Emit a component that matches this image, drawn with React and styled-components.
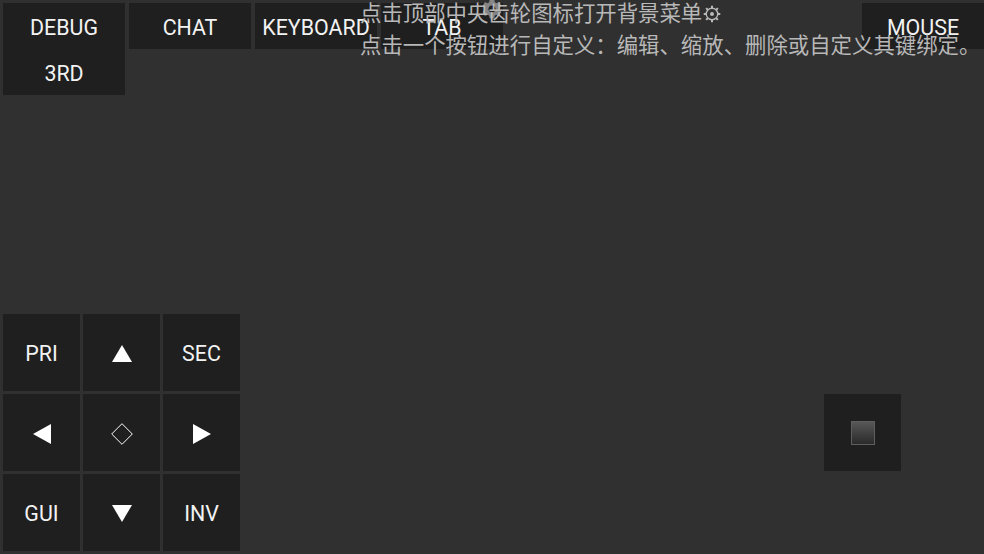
import React from "react";
import styled, { createGlobalStyle } from "styled-components";
import { MdSettings } from "react-icons/md";

const Global = createGlobalStyle`
  html, body { margin: 0; padding: 0; background: #303030; }
  body { font-family: Roboto, "Noto Sans", sans-serif; }
  * { box-sizing: border-box; }
`;

const Screen = styled.div`
  position: relative;
  width: 100vw;
  height: 100vh;
  background: #303030;
  display: flex;
  flex-direction: column;
  justify-content: space-between;
  overflow: hidden;
`;

const TopBar = styled.div`
  display: flex;
  align-items: flex-start;
  padding-top: 3px;
  padding-left: 3px;
`;

const Stack = styled.div`
  display: flex;
  flex-direction: column;
`;

const Key = styled.div`
  width: ${(p) => p.$w || 122}px;
  height: ${(p) => p.$h || 46}px;
  margin-left: ${(p) => p.$ml || 0}px;
  padding-top: 2px;
  background: #1f1f1f;
  color: #f2f2f2;
  font-family: Roboto, "Noto Sans", sans-serif;
  font-size: 21.4px;
  display: flex;
  align-items: center;
  justify-content: center;
  flex-shrink: 0;
`;

const Spacer = styled.div`
  flex: 1;
`;

const Hint = styled.div`
  position: absolute;
  left: 360px;
  top: -4px;
  font-family: "Noto Sans CJK SC", "Noto Sans", sans-serif;
  font-size: 21.4px;
  line-height: 32px;
  color: #b8b8b8;
  white-space: nowrap;
  pointer-events: none;
`;

const HintGear = styled.svg`
  display: inline-block;
  vertical-align: -2px;
  margin-left: 1px;
`;

const TopGear = styled.div`
  position: absolute;
  left: 480px;
  top: -3px;
  color: rgba(150, 150, 150, 0.85);
  display: flex;
`;

const BottomBar = styled.div`
  display: flex;
  align-items: flex-end;
  justify-content: space-between;
  padding: 0 83px 3px 3px;
`;

const Pad = styled.div`
  display: grid;
  grid-template-columns: repeat(3, 77px);
  grid-template-rows: repeat(3, 77px);
  gap: 3px;
`;

const PadKey = styled.div`
  background: #1f1f1f;
  color: #f2f2f2;
  font-family: Roboto, "Noto Sans", sans-serif;
  font-size: 21.4px;
  padding-top: 2px;
  display: flex;
  align-items: center;
  justify-content: center;
`;

const SquareKey = styled.div`
  width: 77px;
  height: 77px;
  margin-bottom: 80px;
  background: #1f1f1f;
  display: flex;
  align-items: center;
  justify-content: center;
`;

const StopIcon = styled.div`
  width: 24px;
  height: 24px;
  border: 1px solid #5e5e5e;
  background: linear-gradient(#575757, #2a2a2a);
`;

const Tri = ({ dir }) => {
  const pts = {
    up: "10,0 20,17 0,17",
    down: "0,0 20,0 10,17",
    left: "18,0 18,20 0,10",
    right: "0,0 18,10 0,20",
  }[dir];
  const w = dir === "up" || dir === "down" ? 20 : 18;
  const h = dir === "up" || dir === "down" ? 17 : 20;
  return (
    <svg width={w} height={h} viewBox={`0 0 ${w} ${h}`}>
      <polygon points={pts} fill="#ffffff" />
    </svg>
  );
};

const Diamond = () => (
  <svg width="22" height="22" viewBox="0 0 22 22">
    <polygon points="11,0.7 21.3,11 11,21.3 0.7,11" fill="none" stroke="#ffffff" strokeWidth="1" />
  </svg>
);

const SmallGear = () => {
  const ticks = [];
  for (let i = 0; i < 8; i++) {
    const a = (i * Math.PI) / 4;
    ticks.push(
      <line
        key={i}
        x1={9 + Math.cos(a) * 6}
        y1={9 + Math.sin(a) * 6}
        x2={9 + Math.cos(a) * 8.3}
        y2={9 + Math.sin(a) * 8.3}
        stroke="#b8b8b8"
        strokeWidth="2"
      />
    );
  }
  return (
    <HintGear width="18" height="18" viewBox="0 0 18 18">
      <circle cx="9" cy="9" r="5.8" fill="none" stroke="#b8b8b8" strokeWidth="1.4" />
      <circle cx="9" cy="9" r="2" fill="#b8b8b8" />
      {ticks}
    </HintGear>
  );
};

export default function App() {
  return (
    <>
      <Global />
      <Screen>
        <TopBar>
          <Stack>
            <Key>DEBUG</Key>
            <Key>3RD</Key>
          </Stack>
          <Key $ml={4}>CHAT</Key>
          <Key $ml={4}>KEYBOARD</Key>
          <Key $ml={4}>TAB</Key>
          <Spacer />
          <Key>MOUSE</Key>
        </TopBar>
        <BottomBar>
          <Pad>
            <PadKey>PRI</PadKey>
            <PadKey><Tri dir="up" /></PadKey>
            <PadKey>SEC</PadKey>
            <PadKey><Tri dir="left" /></PadKey>
            <PadKey><Diamond /></PadKey>
            <PadKey><Tri dir="right" /></PadKey>
            <PadKey>GUI</PadKey>
            <PadKey><Tri dir="down" /></PadKey>
            <PadKey>INV</PadKey>
          </Pad>
          <SquareKey>
            <StopIcon />
          </SquareKey>
        </BottomBar>
        <TopGear>
          <MdSettings size={24} />
        </TopGear>
        <Hint>
          点击顶部中央齿轮图标打开背景菜单<SmallGear />
          <br />
          点击一个按钮进行自定义：编辑、缩放、删除或自定义其键绑定。
        </Hint>
      </Screen>
    </>
  );
}
